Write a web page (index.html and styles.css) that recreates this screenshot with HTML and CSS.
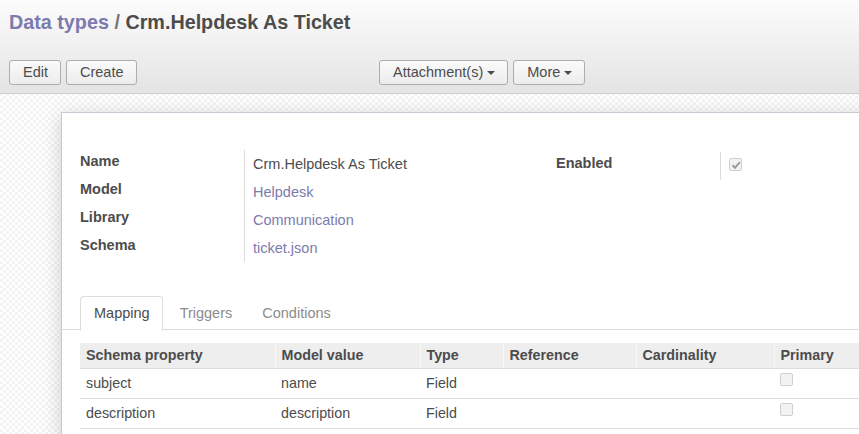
FILE: index.html
```html
<!DOCTYPE html>
<html>
<head>
<meta charset="utf-8">
<link rel="stylesheet" href="styles.css">
</head>
<body>
<div class="cp">
  <h1 class="title"><a class="crumb">Data types</a> <span class="sep">/</span> <span class="cur">Crm.Helpdesk As Ticket</span></h1>
  <div class="btnrow">
    <div class="grp-left">
      <button class="btn">Edit</button>
      <button class="btn">Create</button>
    </div>
    <div class="grp-mid">
      <button class="btn">Attachment(s) <span class="caret"></span></button>
      <button class="btn">More <span class="caret"></span></button>
    </div>
  </div>
</div>
<div class="content">
  <div class="sheet">
    <div class="groups">
      <div class="group">
        <div class="lbl">Name</div><div class="val">Crm.Helpdesk As Ticket</div>
        <div class="lbl">Model</div><div class="val link">Helpdesk</div>
        <div class="lbl">Library</div><div class="val link">Communication</div>
        <div class="lbl">Schema</div><div class="val link">ticket.json</div>
      </div>
      <div class="group group-right">
        <div class="lbl">Enabled</div><div class="val"><span class="cb checked"><svg viewBox="0 0 12 12" width="12" height="12"><path d="M2.5 6.3 L5 8.8 L9.8 3.2" fill="none" stroke="#9a9a9a" stroke-width="2"/></svg></span></div>
      </div>
    </div>
    <div class="tabs">
      <div class="tab active">Mapping</div>
      <div class="tab">Triggers</div>
      <div class="tab">Conditions</div>
    </div>
    <table class="grid">
      <colgroup>
        <col style="width:195px"><col style="width:145px"><col style="width:83px"><col style="width:133px"><col style="width:138px"><col style="width:200px">
      </colgroup>
      <thead>
        <tr><th>Schema property</th><th>Model value</th><th>Type</th><th>Reference</th><th>Cardinality</th><th>Primary</th></tr>
      </thead>
      <tbody>
        <tr><td>subject</td><td>name</td><td>Field</td><td></td><td></td><td><span class="cb"></span></td></tr>
        <tr><td>description</td><td>description</td><td>Field</td><td></td><td></td><td><span class="cb"></span></td></tr>
      </tbody>
    </table>
  </div>
</div>
</body>
</html>
```
FILE: styles.css
```css
html, body {
  margin: 0;
  padding: 0;
  height: 100%;
  overflow: hidden;
}
body {
  font-family: "Liberation Sans", Arial, sans-serif;
  font-size: 14.5px;
  color: #4c4c4c;
  background: repeating-conic-gradient(#f3f3f3 0 25%, #ffffff 0 50%) 0 0 / 6px 6px;
}
.cp {
  height: 93px;
  background: linear-gradient(to bottom, #fcfcfc, #e4e4e4);
  border-bottom: 1px solid #cfcfcf;
  box-sizing: content-box;
}
.title {
  margin: 0;
  padding: 10px 0 0 9px;
  font-size: 19.75px;
  line-height: 24px;
  font-weight: bold;
  height: 42px;
}
.crumb { color: #7c7bad; }
.sep { color: #777; }
.cur { color: #4c4c4c; }
.btnrow {
  display: flex;
  padding-left: 9px;
  margin-top: 8px;
}
.grp-left {
  display: flex;
  gap: 5px;
  width: 370px;
}
.grp-mid {
  display: flex;
  gap: 5px;
}
.btn {
  font-family: "Liberation Sans", Arial, sans-serif;
  font-size: 14.5px;
  color: #4c4c4c;
  height: 25px;
  padding: 0 12px 0 13px;
  border: 1px solid #adadad;
  border-radius: 3px;
  background: linear-gradient(to bottom, #fafafa, #ececec);
  line-height: 23px;
  display: flex;
  align-items: center;
  gap: 4px;
}
.caret {
  display: inline-block;
  width: 0;
  height: 0;
  border-left: 4px solid transparent;
  border-right: 4px solid transparent;
  border-top: 4px solid #4c4c4c;
  margin-top: 1px;
}
.content {
  padding: 18px 0 0 61px;
}
.sheet {
  width: 1000px;
  height: 400px;
  background: #fff;
  border: 1px solid #c8c8d2;
  box-shadow: 0 4px 18px rgba(0,0,0,0.18);
  padding: 37px 0 0 18px;
}
.groups {
  display: flex;
}
.group {
  display: grid;
  grid-template-columns: 165px 311px;
  grid-auto-rows: 28px;
}
.group-right {
  margin-top: 2px;
}
.lbl {
  font-weight: bold;
  line-height: 20px;
  padding-top: 1px;
  border-right: 1px solid #dcdcdc;
}
.val {
  line-height: 20px;
  padding: 4px 0 0 8px;
}
.link { color: #7c7bad; }
.cb {
  display: inline-block;
  width: 11px;
  height: 11px;
  border: 1px solid #cfcfcf;
  border-radius: 2px;
  background: #f2f2f2;
  position: relative;
  vertical-align: top;
}
.cb svg {
  position: absolute;
  left: 0;
  top: 0;
}
.group-right .val { padding-top: 6px; }
.tabs {
  display: flex;
  margin: 34px 0 0 -18px;
  padding-left: 18px;
  border-bottom: 1px solid #dddddd;
  height: 33px;
}
.tab {
  padding: 0 12px 0 13px;
  line-height: 33px;
  color: #8c8c8c;
  margin-right: 3px;
  border: 1px solid transparent;
  border-bottom: none;
  border-radius: 4px 4px 0 0;
}
.tab.active {
  color: #4c4c4c;
  border-color: #dddddd;
  background: #fff;
  height: 34px;
}
.grid {
  margin-top: 13px;
  border-collapse: collapse;
  table-layout: fixed;
  width: 894px;
  font-size: 14.3px;
}
.grid th {
  background: #eeeeee;
  text-align: left;
  font-weight: bold;
  height: 24px;
  padding: 0 6px 1px;
  border-left: 1px solid #f8f8f8;
  border-bottom: 1px solid #dddddd;
}
.grid th:first-child { border-left: none; }
.grid td {
  height: 27px;
  padding: 0 6px 2px;
  border-bottom: 1px solid #dddddd;
  vertical-align: middle;
}
.grid td .cb {
  vertical-align: -4px;
  position: relative;
  top: -5px;
}
```
